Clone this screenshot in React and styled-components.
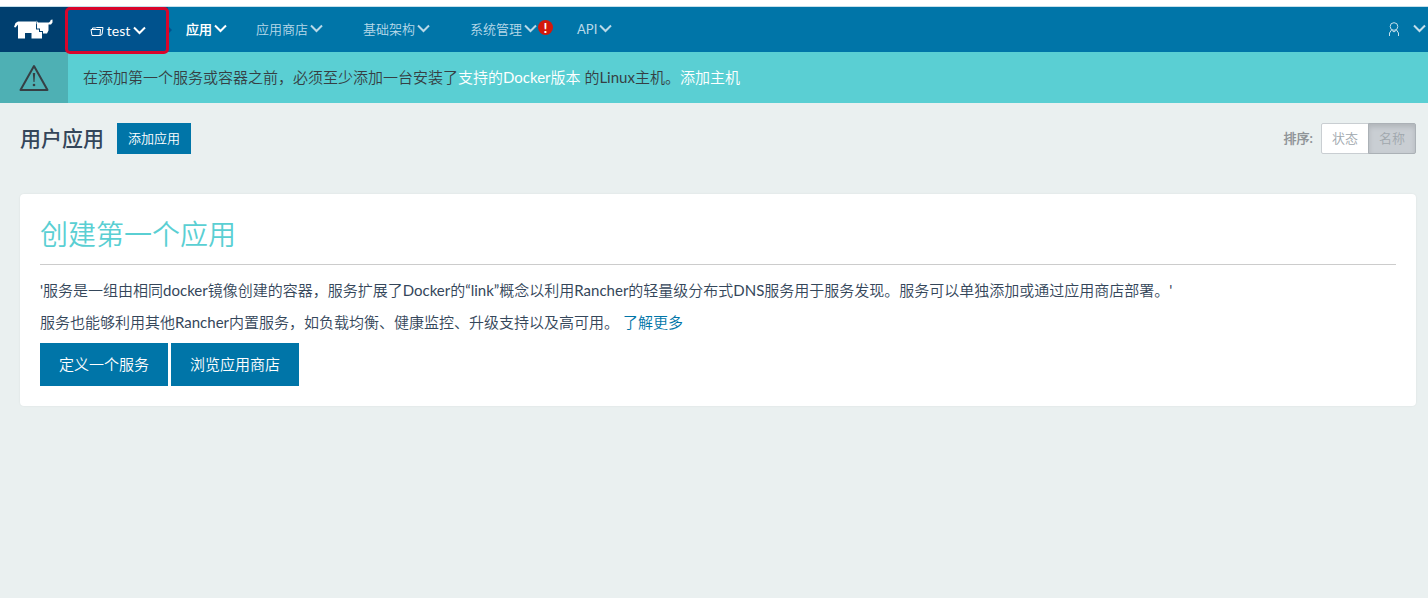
import styled, { createGlobalStyle } from "styled-components";

const GlobalStyle = createGlobalStyle`
  * {
    box-sizing: border-box;
  }
  body {
    margin: 0;
    background: #eaf0f0;
    color: #34465a;
    font-family: Lato, "Noto Sans CJK SC DemiLight", "Noto Sans CJK SC", sans-serif;
    font-size: 15px;
    line-height: 22px;
  }
  a {
    color: #0075a8;
    text-decoration: none;
  }
  button {
    font-family: inherit;
    cursor: pointer;
  }
`;

const Top = styled.div`
  border-top: 6px solid #fff;
`;

const Header = styled.header`
  display: flex;
  align-items: stretch;
  height: 46px;
  border-top: 1px solid #c5e0ec;
  background: #0075a8;
`;

const Logo = styled.a`
  display: flex;
  align-items: center;
  width: 68px;
  padding-left: 14px;
  background: #003f6f;
`;

const ProjectItem = styled.div`
  position: relative;
  display: flex;
  width: 100px;
  background: #00528d;
  &:before {
    content: "";
    position: absolute;
    top: 19px;
    right: -4px;
    border: 4px solid transparent;
    border-right: 0;
    border-left-color: #00528d;
  }
  &:after {
    content: "";
    position: absolute;
    inset: 0 -1px -2px -3px;
    border: 3px solid #d9052b;
    border-radius: 5px;
  }
`;

const ProjectButton = styled.button`
  display: flex;
  flex: 1;
  align-items: center;
  justify-content: center;
  gap: 3px;
  padding: 2px 0 0;
  border: 0;
  background: none;
  color: #fff;
  font-size: 14px;
`;

const Nav = styled.nav`
  display: flex;
  flex: 1;
  padding-left: 18px;
`;

const NavLink = styled.a`
  position: relative;
  display: flex;
  align-items: center;
  gap: 2px;
  margin-right: ${(props) => (props.$active ? "29px" : "40px")};
  padding-bottom: 2px;
  color: ${(props) => (props.$active ? "#fff" : "#b9d9e8")};
  font-size: 13px;
  font-weight: ${(props) => (props.$active ? "bold" : "normal")};
`;

const Alert = styled.span`
  position: absolute;
  top: 13px;
  left: 100%;
  width: 15px;
  height: 15px;
  margin-left: 1px;
  border-radius: 50%;
  background: #d3180c;
  color: #fff;
  font-size: 14px;
  font-weight: bold;
  line-height: 15px;
  text-align: center;
`;

const UserButton = styled.button`
  display: flex;
  align-items: center;
  gap: 13px;
  padding: 0 2px 2px 0;
  border: 0;
  background: none;
  color: #c4dfeb;
`;

const Banner = styled.div`
  display: flex;
  min-height: 51px;
  background: #5acfd3;
  color: #363f44;
  a {
    color: #fff;
  }
`;

const BannerIcon = styled.div`
  display: flex;
  align-items: center;
  justify-content: center;
  width: 68px;
  background: #4eb0b4;
`;

const BannerText = styled.p`
  align-self: center;
  margin: 0;
  padding: 0 0 2px 15px;
`;

const Toolbar = styled.div`
  display: flex;
  align-items: center;
  gap: 13px;
  padding: 20px 12px 20px 20px;
`;

const Title = styled.h1`
  margin: 0;
  padding-bottom: 2px;
  font-family: Lato, "Noto Sans CJK SC", sans-serif;
  font-size: 21px;
  font-weight: 500;
`;

const Button = styled.button`
  height: ${(props) => (props.$large ? "43px" : "31px")};
  padding: 0 ${(props) => (props.$large ? "19px" : "11px")} 2px;
  border: 0;
  background: #0075a8;
  color: #fff;
  font-size: ${(props) => (props.$large ? "15px" : "13px")};
`;

const Sort = styled.div`
  display: flex;
  align-items: center;
  gap: 8px;
  margin-left: auto;
  color: #909598;
  font-size: 13px;
`;

const SortLabel = styled.span`
  padding-bottom: 2px;
  font-weight: bold;
`;

const SortGroup = styled.div`
  display: flex;
`;

const SortButton = styled.button`
  height: 31px;
  padding: 0 10px 2px;
  border: 1px solid ${(props) => (props.$selected ? "#abb1b6" : "#c9ced2")};
  border-radius: ${(props) => (props.$selected ? "0 2px 2px 0" : "2px 0 0 2px")};
  background: ${(props) => (props.$selected ? "#c9ced3" : "#fff")};
  box-shadow: ${(props) =>
    props.$selected ? "inset 0 3px 5px rgba(0, 0, 0, 0.12)" : "none"};
  color: #a0a7ad;
  font-size: 13px;
  & + & {
    margin-left: -1px;
  }
`;

const Card = styled.section`
  margin: 20px 12px 20px 20px;
  padding: 20px;
  border-radius: 4px;
  background: #fff;
  box-shadow: 0 0 2px rgba(0, 0, 0, 0.08);
`;

const CardTitle = styled.h2`
  margin: 0 0 14px;
  padding-bottom: 10px;
  border-bottom: 1px solid #ccc;
  color: #5acfd3;
  font-family: Lato, "Noto Sans CJK SC", sans-serif;
  font-size: 28px;
  font-weight: 350;
  line-height: 40px;
`;

const Text = styled.p`
  margin: 0 0 10px;
`;

const Actions = styled.div`
  display: flex;
  gap: 3px;
`;

const menu = [
  { label: "应用", active: true },
  { label: "应用商店" },
  { label: "基础架构" },
  { label: "系统管理", alert: true },
  { label: "API" },
];

function Chevron() {
  return (
    <svg width="13" height="9" viewBox="0 0 13 9" fill="none" stroke="currentColor" strokeWidth="2">
      <path d="M1 1.5 6.5 7 12 1.5" />
    </svg>
  );
}

function Cow() {
  return (
    <svg width="39" height="21" viewBox="0 0 39 21" fill="#fff">
      <path d="M0 8 1.5 4 4 2.5H22V10.5H25V13H28V19.5H17.5V14H11V19.5H4V5.5L1.5 8.5Z" />
      <path d="M22.5 1.5 24 3.5H35L36.5 2V1L38.5 .5V3.5L37 5.5H34.5V11.5L33 14.5H29V12H26V9.5H23V5.5L22.5 4.5Z" />
    </svg>
  );
}

function Folder() {
  return (
    <svg width="14" height="12" viewBox="0 0 14 12" fill="none" stroke="currentColor">
      <path d="M1 4.5H10.5L10 10.5H2ZM2.5 4.5V3H5.5L6.5 2.5H13L12 9.5 10 10.5" />
    </svg>
  );
}

function Warning() {
  return (
    <svg width="30" height="28" viewBox="0 0 30 28" fill="none" stroke="#363f44" strokeWidth="2">
      <path d="M15 2 28.5 26H1.5Z" strokeLinejoin="round" />
      <path d="M13.8 9H16.2L15.5 18H14.5Z" fill="#363f44" stroke="none" />
      <circle cx="15" cy="21" r="1.3" fill="#363f44" stroke="none" />
    </svg>
  );
}

function User() {
  return (
    <svg width="12" height="14" viewBox="0 0 12 14" fill="none" stroke="currentColor">
      <circle cx="6" cy="4.5" r="3.8" />
      <path d="M1.5 14V11L3.5 8 6 10 8.5 8 10.5 11V14" />
    </svg>
  );
}

export default function App() {
  return (
    <>
      <GlobalStyle />
      <Top>
        <Header>
          <Logo href="#" aria-label="Rancher">
            <Cow />
          </Logo>
          <ProjectItem>
            <ProjectButton>
              <Folder />
              test
              <Chevron />
            </ProjectButton>
          </ProjectItem>
          <Nav>
            {menu.map((item) => (
              <NavLink key={item.label} href="#" $active={item.active}>
                {item.label}
                <Chevron />
                {item.alert && <Alert>!</Alert>}
              </NavLink>
            ))}
          </Nav>
          <UserButton aria-label="User">
            <User />
            <Chevron />
          </UserButton>
        </Header>
      </Top>
      <Banner>
        <BannerIcon>
          <Warning />
        </BannerIcon>
        <BannerText>
          在添加第一个服务或容器之前，必须至少添加一台安装了
          <a href="#">支持的Docker版本</a> 的Linux主机。<a href="#">添加主机</a>
        </BannerText>
      </Banner>
      <main>
        <Toolbar>
          <Title>用户应用</Title>
          <Button>添加应用</Button>
          <Sort>
            <SortLabel>排序:</SortLabel>
            <SortGroup>
              <SortButton>状态</SortButton>
              <SortButton $selected>名称</SortButton>
            </SortGroup>
          </Sort>
        </Toolbar>
        <Card>
          <CardTitle>创建第一个应用</CardTitle>
          <Text>
            '服务是一组由相同docker镜像创建的容器，服务扩展了Docker的“link”概念以利用Rancher的轻量级分布式DNS服务用于服务发现。服务可以单独添加或通过应用商店部署。'
          </Text>
          <Text>
            服务也能够利用其他Rancher内置服务，如负载均衡、健康监控、升级支持以及高可用。 <a href="#">了解更多</a>
          </Text>
          <Actions>
            <Button $large>定义一个服务</Button>
            <Button $large>浏览应用商店</Button>
          </Actions>
        </Card>
      </main>
    </>
  );
}
